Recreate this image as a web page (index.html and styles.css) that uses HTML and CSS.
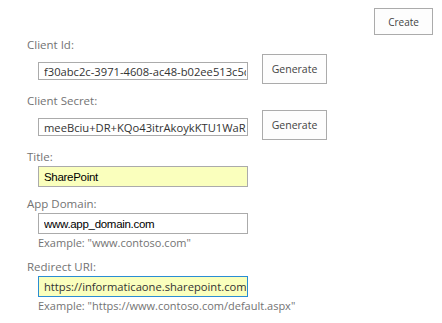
FILE: index.html
```html
<!DOCTYPE html>
<html lang="en">
<head>
  <meta charset="UTF-8" />
  <title>Register an App</title>
  <link rel="stylesheet" href="styles.css">
</head>
<body>
  <div class="toolbar">
    <button class="button create-button">Create</button>
  </div>

  <div class="form">
    <div class="label first">Client Id:</div>
    <div class="field-row">
      <input class="text-input short" type="text" value="f30abc2c-3971-4608-ac48-b02ee513c5d2">
      <button class="button generate-button">Generate</button>
    </div>

    <div class="label">Client Secret:</div>
    <div class="field-row">
      <input class="text-input short" type="text" value="meeBciu+DR+KQo43itrAkoykKTU1WaRbX0YpJw=">
      <button class="button generate-button">Generate</button>
    </div>

    <div class="label">Title:</div>
    <div class="field">
      <input class="text-input autofill arial" type="text" value="SharePoint">
    </div>

    <div class="label">App Domain:</div>
    <div class="field">
      <input class="text-input arial" type="text" value="www.app_domain.com">
      <div class="hint">Example: "www.contoso.com"</div>
    </div>

    <div class="label">Redirect URI:</div>
    <div class="field">
      <input class="text-input autofill focused" type="text" value="https://informaticaone.sharepoint.com">
      <div class="hint">Example: "https://www.contoso.com/default.aspx"</div>
    </div>
  </div>
</body>
</html>
```

FILE: styles.css
```css
:root {
  --label: #737373;
  --border: #ababab;
  --text: #333333;
  --autofill: #faffbd;
  --focus: #2a8dd4;
}

* { box-sizing: border-box; margin: 0; padding: 0; }
html, body {
  height: 100%;
  background: #ffffff;
  font-family: 'Open Sans', 'Noto Sans', sans-serif;
  color: var(--text);
  overflow: hidden;
}

.toolbar {
  display: flex;
  justify-content: flex-end;
  padding: 8px 9px 0 0;
}

.button {
  background: #fdfdfd;
  border: 1px solid var(--border);
  color: #444444;
  font-family: 'Open Sans', 'Noto Sans', sans-serif;
  cursor: pointer;
}

.create-button {
  width: 59px;
  height: 27px;
  font-size: 10px;
}

.generate-button {
  width: 65px;
  height: 30px;
  font-size: 10.5px;
}

.form {
  display: flex;
  flex-direction: column;
  padding-left: 27px;
}

.label {
  margin-top: 8px;
  font-size: 11.5px;
  line-height: 17px;
  color: var(--label);
}
.label.first { margin-top: 1px; }

.field-row {
  display: flex;
  align-items: flex-start;
  gap: 14px;
  margin: 1px 0 0 11px;
}
.field-row .text-input { margin-top: 8px; }

.field {
  margin: 1px 0 0 11px;
}

.text-input {
  display: block;
  width: 210px;
  height: 21px;
  padding: 0 1px 0 5px;
  border: 1px solid var(--border);
  background: #ffffff;
  font-family: 'Open Sans', 'Noto Sans', sans-serif;
  font-size: 11.2px;
  color: var(--text);
  outline: none;
}
.text-input.short { height: 18px; }

.text-input.arial {
  font-family: 'Liberation Sans', Arial, sans-serif;
  font-size: 11.5px;
  letter-spacing: -0.3px;
  color: #000000;
}

.text-input.autofill { background: var(--autofill); }
.text-input.focused { border-color: var(--focus); }

.hint {
  margin-top: 1px;
  font-size: 11px;
  line-height: 15px;
  color: var(--label);
}
```
